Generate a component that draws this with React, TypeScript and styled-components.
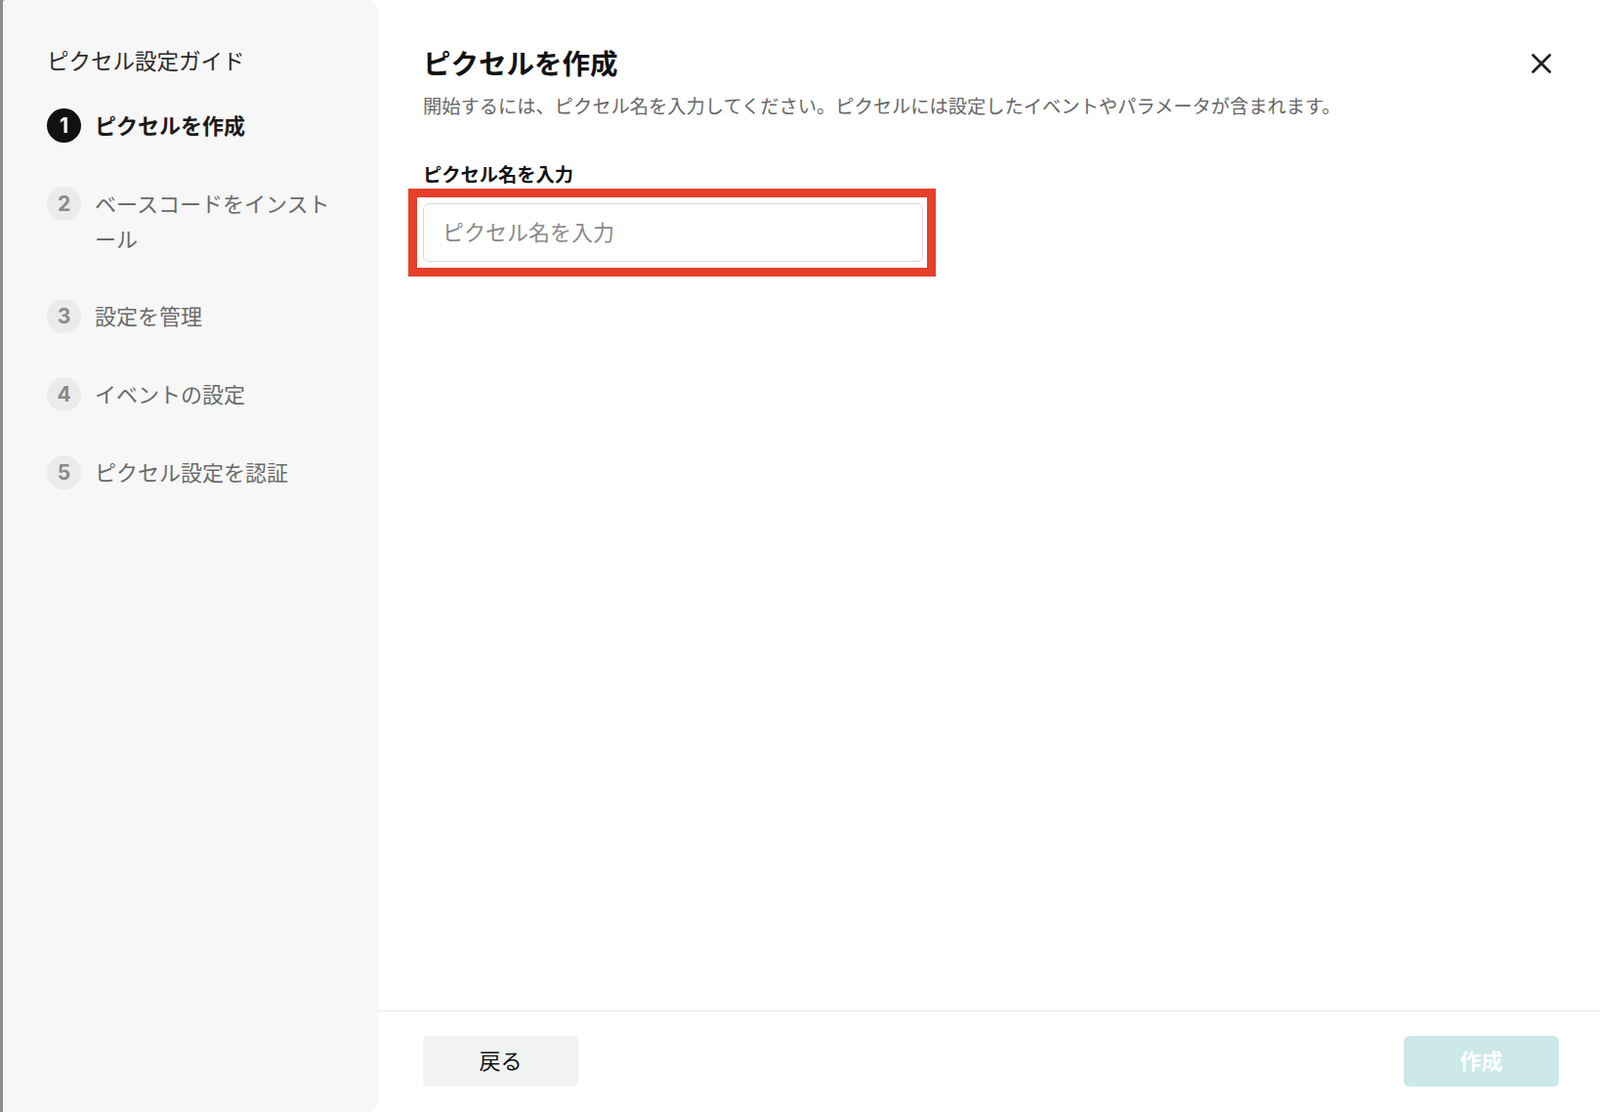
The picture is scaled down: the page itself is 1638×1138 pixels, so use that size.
import React from "react";
import styled, { createGlobalStyle } from "styled-components";

const GlobalStyle = createGlobalStyle`
  html, body {
    margin: 0;
    padding: 0;
    height: 100%;
  }
  body {
    font-family: "Noto Sans CJK JP", "Noto Sans", "Liberation Sans", sans-serif;
    color: #111;
    -webkit-font-smoothing: antialiased;
  }
  #root {
    height: 100%;
  }
  * {
    box-sizing: border-box;
  }
`;

const Backdrop = styled.div`
  display: flex;
  height: 100vh;
  padding-left: 3px;
  background-color: #8d8d8d;
`;

const Modal = styled.div`
  flex: 1;
  display: flex;
  background-color: #ffffff;
  border-top-left-radius: 3px;
  overflow: hidden;
`;

const Sidebar = styled.aside`
  width: 384px;
  flex-shrink: 0;
  background-color: #f7f7f7;
  border-radius: 2px 10px 10px 0;
  padding: 45px 40px 0 45px;
  display: flex;
  flex-direction: column;
`;

const SidebarTitle = styled.div`
  font-size: 22.5px;
  line-height: 32px;
  color: #2a2a2a;
  margin-bottom: 32px;
`;

const StepList = styled.ol`
  list-style: none;
  margin: 0;
  padding: 0;
  display: flex;
  flex-direction: column;
  gap: 43px;
`;

const Step = styled.li`
  display: flex;
  align-items: flex-start;
  gap: 14px;
`;

const StepNumber = styled.span<{ $active?: boolean }>`
  width: 35px;
  height: 35px;
  margin-top: 2px;
  flex-shrink: 0;
  border-radius: 50%;
  display: flex;
  align-items: center;
  justify-content: center;
  font-family: "Inter", "Noto Sans", sans-serif;
  font-size: 21px;
  font-weight: 700;
  background-color: ${(p) => (p.$active ? "#111111" : "#ebebeb")};
  color: ${(p) => (p.$active ? "#ffffff" : "#8a8a8a")};
`;

const StepLabel = styled.span<{ $active?: boolean }>`
  font-size: 22px;
  line-height: 36px;
  font-weight: ${(p) => (p.$active ? 700 : 400)};
  color: ${(p) => (p.$active ? "#1a1a1a" : "#6a6a6a")};
`;

const Main = styled.main`
  flex: 1;
  display: flex;
  flex-direction: column;
  min-width: 0;
`;

const Body = styled.section`
  flex: 1;
  padding: 45px 44px 0 46px;
`;

const HeaderRow = styled.div`
  display: flex;
  align-items: center;
  justify-content: space-between;
`;

const Title = styled.h1`
  margin: 0;
  font-size: 28.5px;
  line-height: 38px;
  font-weight: 700;
  color: #111;
`;

const CloseButton = styled.button`
  width: 32px;
  height: 32px;
  margin-top: 2px;
  border: none;
  background: transparent;
  padding: 0;
  display: flex;
  align-items: center;
  justify-content: center;
  color: #1f1f1f;
  cursor: pointer;
`;

const Description = styled.p`
  margin: 11px 0 0;
  font-size: 19.25px;
  line-height: 28px;
  color: #666666;
`;

const FieldLabel = styled.label`
  display: block;
  margin-top: 43px;
  margin-bottom: 17px;
  font-size: 19.25px;
  line-height: 26px;
  font-weight: 700;
  color: #111;
`;

const Highlight = styled.div`
  position: relative;
  width: 512px;

  &::after {
    content: "";
    position: absolute;
    top: -15px;
    left: -15px;
    right: -13px;
    bottom: -15px;
    border: 9px solid #e5402a;
    pointer-events: none;
  }
`;

const TextInput = styled.input`
  width: 100%;
  height: 60px;
  padding: 0 19px 4px;
  border: 1px solid #d8d8d8;
  border-radius: 6px;
  background-color: #fff;
  font-family: inherit;
  font-size: 22px;
  color: #111;
  outline: none;

  &::placeholder {
    color: #8a8a8a;
  }
`;

const Footer = styled.footer`
  border-top: 1px solid #e8e8e8;
  padding: 25px 42px 26px 46px;
  display: flex;
  justify-content: space-between;
  align-items: center;
`;

const FooterButton = styled.button<{ $primary?: boolean }>`
  width: 159px;
  height: 52px;
  padding: 0 0 5px;
  border: none;
  border-radius: 6px;
  font-family: inherit;
  font-size: 22px;
  font-weight: ${(p) => (p.$primary ? 700 : 400)};
  background-color: ${(p) => (p.$primary ? "#cce8e8" : "#f1f2f2")};
  color: ${(p) => (p.$primary ? "#ffffff" : "#111111")};
  cursor: ${(p) => (p.$primary ? "not-allowed" : "pointer")};
`;

const steps = [
  "ピクセルを作成",
  "ベースコードをインストール",
  "設定を管理",
  "イベントの設定",
  "ピクセル設定を認証",
];

export default function App() {
  const activeStep = 0;

  return (
    <>
      <GlobalStyle />
      <Backdrop>
        <Modal>
          <Sidebar>
            <SidebarTitle>ピクセル設定ガイド</SidebarTitle>
            <StepList>
              {steps.map((label, i) => (
                <Step key={label}>
                  <StepNumber $active={i === activeStep}>{i + 1}</StepNumber>
                  <StepLabel $active={i === activeStep}>{label}</StepLabel>
                </Step>
              ))}
            </StepList>
          </Sidebar>

          <Main>
            <Body>
              <HeaderRow>
                <Title>ピクセルを作成</Title>
                <CloseButton aria-label="閉じる">
                  <svg width="20" height="20" viewBox="0 0 20 20" fill="none">
                    <path
                      d="M1.5 1.5L18.5 18.5M18.5 1.5L1.5 18.5"
                      stroke="currentColor"
                      strokeWidth="2.8"
                      strokeLinecap="round"
                    />
                  </svg>
                </CloseButton>
              </HeaderRow>
              <Description>
                開始するには、ピクセル名を入力してください。ピクセルには設定したイベントやパラメータが含まれます。
              </Description>

              <FieldLabel htmlFor="pixel-name">ピクセル名を入力</FieldLabel>
              <Highlight>
                <TextInput id="pixel-name" type="text" placeholder="ピクセル名を入力" />
              </Highlight>
            </Body>

            <Footer>
              <FooterButton>戻る</FooterButton>
              <FooterButton $primary disabled>
                作成
              </FooterButton>
            </Footer>
          </Main>
        </Modal>
      </Backdrop>
    </>
  );
}
